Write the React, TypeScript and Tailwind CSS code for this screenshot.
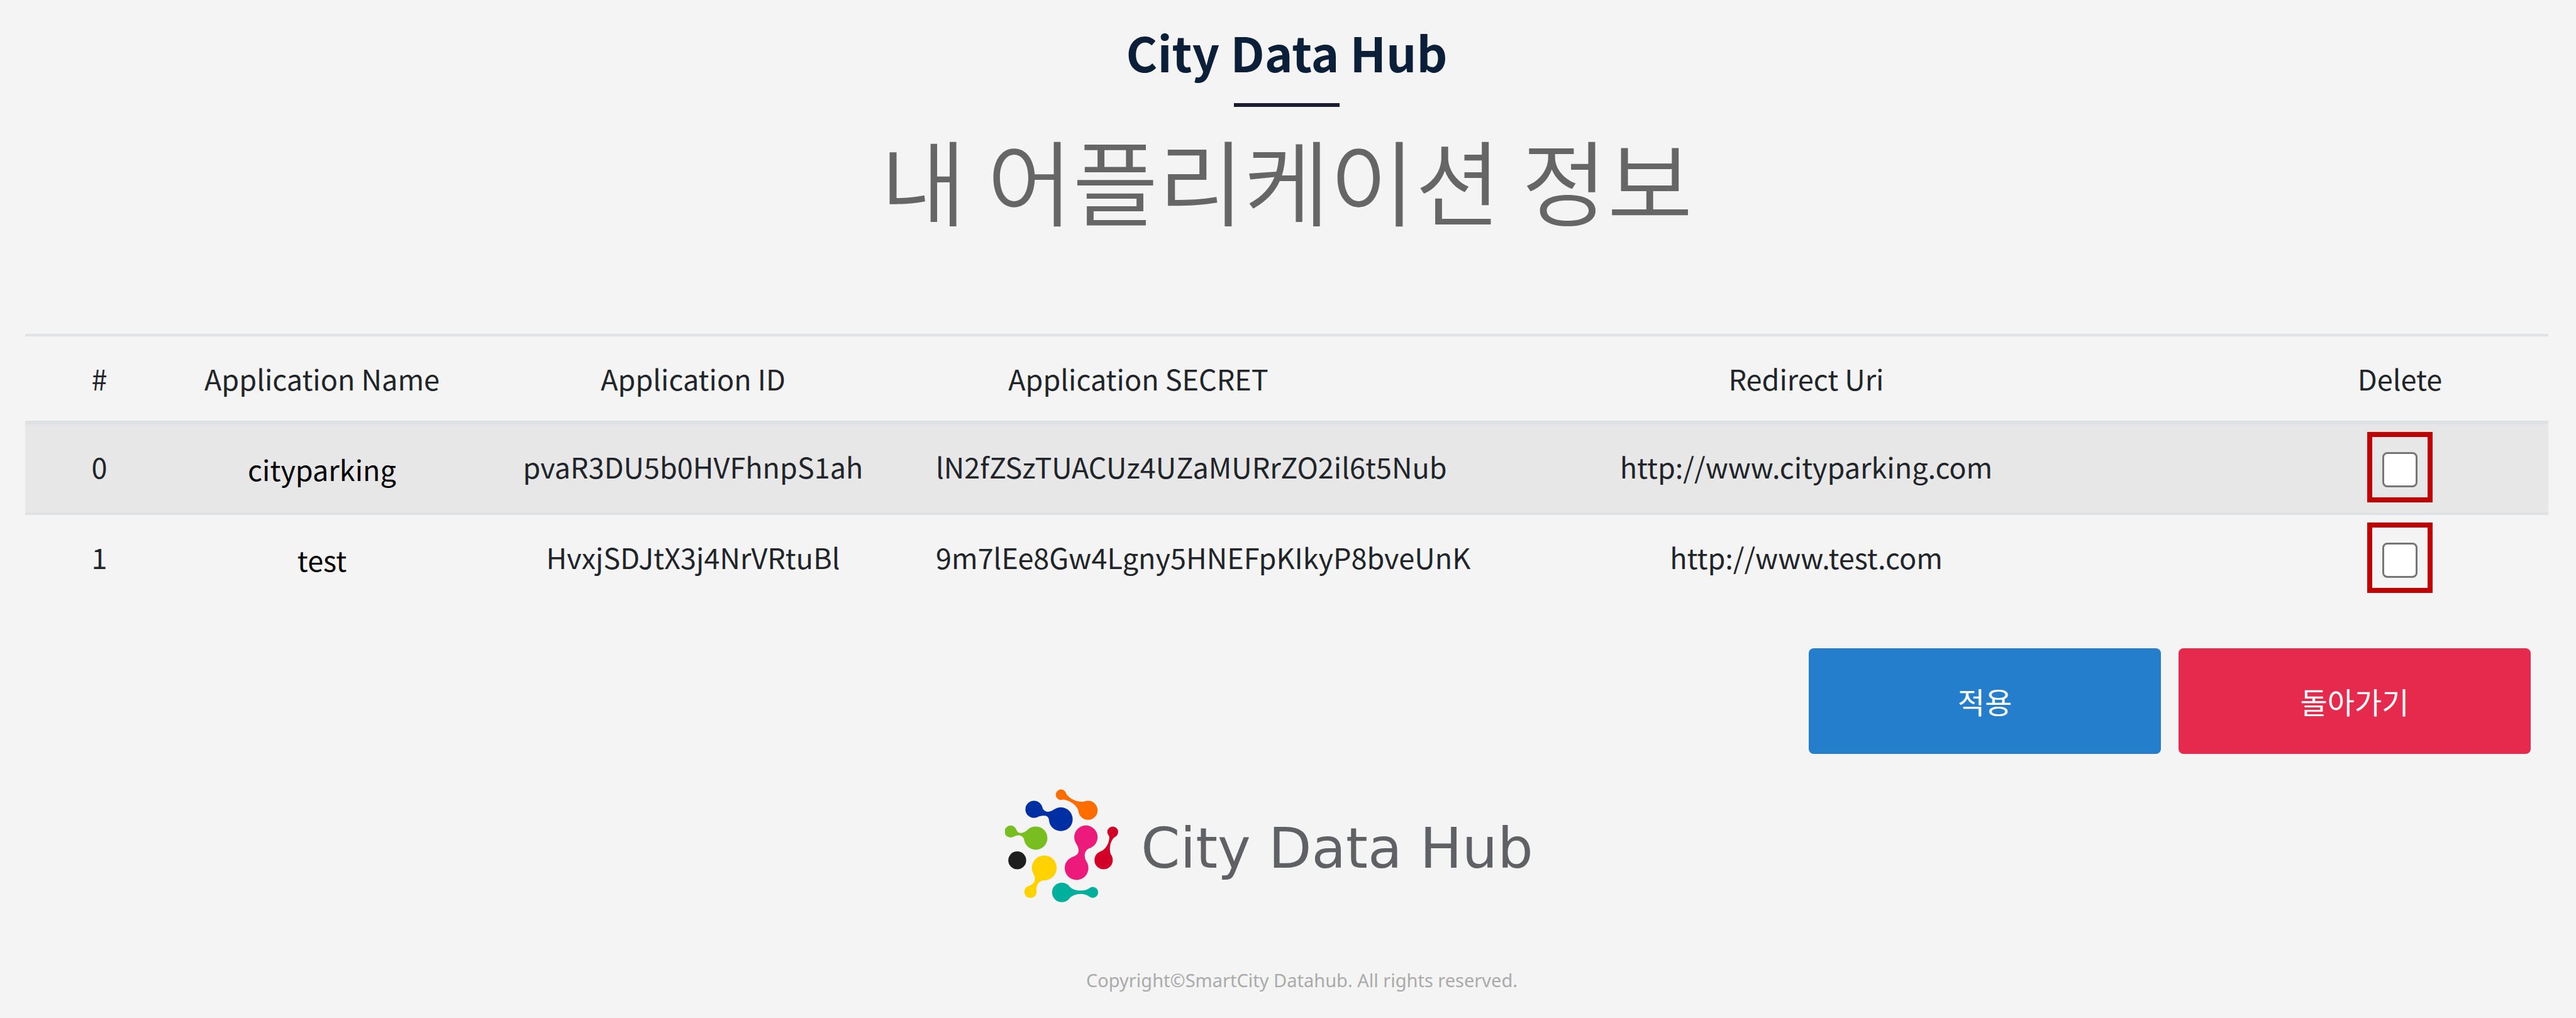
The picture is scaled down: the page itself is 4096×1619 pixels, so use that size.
type Application = {
  name: string;
  id: string;
  secret: string;
  redirectUri: string;
};

const applications: Application[] = [
  {
    name: "cityparking",
    id: "pvaR3DU5b0HVFhnpS1ah",
    secret: "lN2fZSzTUACUz4UZaMURrZO2il6t5Nub",
    redirectUri: "http://www.cityparking.com",
  },
  {
    name: "test",
    id: "HvxjSDJtX3j4NrVRtuBl",
    secret: "9m7lEe8Gw4Lgny5HNEFpKIkyP8bveUnK",
    redirectUri: "http://www.test.com",
  },
];

const headCell = "h-36 border-t-4 border-b-6 border-[#dee2e6] pt-8 align-top font-normal";
const bodyCell = "pt-8 align-top";

function PageHeader() {
  return (
    <header className="flex flex-col items-center pt-8">
      <p className="text-[76px] leading-[100px] font-bold text-[#0c1f38]">City Data Hub</p>
      <div className="mt-8 h-1.5 w-42 bg-[#181c33]" />
      <h1 className="mt-6 text-[148px] leading-[180px] font-[350] text-[#666666]">
        내 어플리케이션 정보
      </h1>
    </header>
  );
}

function ApplicationRow({ app, index }: { app: Application; index: number }) {
  return (
    <tr className="h-35 odd:bg-[#e7e7e7] even:h-36 even:[&>td]:border-t-4 even:[&>td]:border-[#dee2e6]">
      <td className={bodyCell}>{index}</td>
      <td className="pt-9 align-top text-black">
        <a href={`#${app.name}`}>{app.name}</a>
      </td>
      <td className={bodyCell}>{app.id}</td>
      <td className={`${bodyCell} pl-8 text-left`}>{app.secret}</td>
      <td className={bodyCell}>{app.redirectUri}</td>
      <td className="pt-11 align-top">
        <div className="relative mx-auto size-14">
          <input
            type="checkbox"
            aria-label={`Delete ${app.name}`}
            className="block size-14 appearance-none rounded-lg border-[3px] border-[#767676] bg-white checked:bg-[#247ecb]"
          />
          <span className="pointer-events-none absolute -top-8 -right-6 -bottom-6 -left-6 border-8 border-[#c00000]" />
        </div>
      </td>
    </tr>
  );
}

function ApplicationTable() {
  return (
    <table className="w-full table-fixed border-separate border-spacing-0 text-center text-[45px] leading-[70px] whitespace-nowrap text-[#212529]">
      <colgroup>
        <col className="w-[calc(100%/17)]" />
        <col className="w-[calc(200%/17)]" />
        <col className="w-[calc(300%/17)]" />
        <col className="w-[calc(300%/17)]" />
        <col className="w-[calc(600%/17)]" />
        <col className="w-[calc(200%/17)]" />
      </colgroup>
      <thead>
        <tr>
          <th scope="col" className={headCell}>#</th>
          <th scope="col" className={headCell}>Application Name</th>
          <th scope="col" className={headCell}>Application ID</th>
          <th scope="col" className={headCell}>Application SECRET</th>
          <th scope="col" className={headCell}>Redirect Uri</th>
          <th scope="col" className={headCell}>Delete</th>
        </tr>
      </thead>
      <tbody>
        {applications.map((app, index) => (
          <ApplicationRow key={app.id} app={app} index={index} />
        ))}
      </tbody>
    </table>
  );
}

function LogoMark() {
  return (
    <svg viewBox="75 52 582 580" className="h-45 w-45 shrink-0" aria-hidden="true">
      <g fill="#ff6d00">
        <circle cx="363" cy="80" r="27" />
        <circle cx="502" cy="160" r="49" />
        <path d="M386 66C392 84 424 118 480 116L456 176C452 140 420 112 376 104Z" />
      </g>
      <g fill="#002fa3">
        <circle cx="224" cy="155" r="44" />
        <circle cx="362" cy="206" r="61" />
        <path d="M264 136C272 170 296 176 328 155L302 214C300 188 284 182 248 192Z" />
      </g>
      <g fill="#78be20">
        <circle cx="104" cy="269" r="31" />
        <circle cx="233" cy="303" r="60" />
        <path d="M132 256C140 278 160 286 188 263L174 312C168 290 148 282 122 294Z" />
      </g>
      <circle cx="138" cy="417" r="46" fill="#1e1e1e" />
      <g fill="#ffd200">
        <circle cx="277" cy="456" r="64" />
        <circle cx="206" cy="579" r="32" />
        <path d="M222 488C236 512 228 540 196 549L236 590C232 556 244 516 284 520Z" />
      </g>
      <g fill="#ec1a7a">
        <circle cx="491" cy="298" r="60" />
        <circle cx="443" cy="457" r="61" />
        <path d="M442 332C462 366 456 388 424 399L494 424C476 392 484 360 520 351Z" />
      </g>
      <g fill="#d20028">
        <circle cx="629" cy="271" r="28" />
        <circle cx="582" cy="416" r="47" />
        <path d="M610 290C616 316 598 360 564 373L620 390C606 352 620 312 640 296Z" />
      </g>
      <g fill="#00b09c">
        <circle cx="367" cy="582" r="50" />
        <circle cx="526" cy="582" r="28" />
        <path d="M398 543C424 578 480 580 510 560L510 604C480 582 424 586 398 621Z" />
      </g>
    </svg>
  );
}

function PageFooter() {
  return (
    <footer className="mt-14 flex flex-col items-center">
      <div className="flex items-center gap-9 pr-14">
        <LogoMark />
        <p className="pt-2 font-['DejaVu_Sans',sans-serif] text-[89px] leading-[100px] text-[#5f6165]">
          City Data Hub
        </p>
      </div>
      <p className="mt-[100px] pl-12 font-['Noto_Sans',sans-serif] text-[29px] leading-[48px] text-[#aaaaaa]">
        Copyright©SmartCity Datahub. All rights reserved.
      </p>
    </footer>
  );
}

export default function App() {
  return (
    <div className="min-h-screen bg-[#f4f4f4] pr-11 pl-10 font-['Noto_Sans_CJK_KR',sans-serif]">
      <PageHeader />
      <main className="mt-[157px]">
        <ApplicationTable />
        <div className="mt-18 flex justify-end gap-7 pr-7 text-[47px] leading-[70px] text-white">
          <button type="button" className="h-42 w-140 rounded-lg bg-[#247ecb]">
            적용
          </button>
          <button type="button" className="h-42 w-140 rounded-lg bg-[#e62a4e]">
            돌아가기
          </button>
        </div>
      </main>
      <PageFooter />
    </div>
  );
}
